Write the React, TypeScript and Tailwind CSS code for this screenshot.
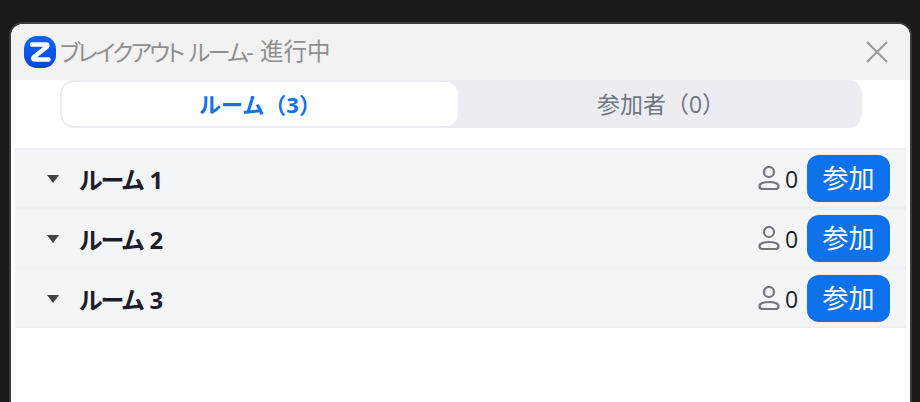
const rooms = ["ルーム 1", "ルーム 2", "ルーム 3"];

const font = "font-['Open_Sans','Noto_Sans_CJK_JP',sans-serif]";

function ZoomLogo() {
  return (
    <svg width="32" height="32" viewBox="0 0 32 32" className="shrink-0">
      <defs>
        <linearGradient id="logo-bg" x1="0" y1="0" x2="0" y2="1">
          <stop offset="0" stopColor="#0f66ff" />
          <stop offset="1" stopColor="#0845d8" />
        </linearGradient>
      </defs>
      <rect x="0" y="0" width="32" height="32" rx="13" fill="url(#logo-bg)" />
      <path
        d="M8 8.5H22Q24.5 8.5 22.5 11L10 21Q8 23.5 11 23.5H24.5"
        fill="none"
        stroke="#fff"
        strokeWidth="4.5"
        strokeLinecap="round"
        strokeLinejoin="round"
      />
    </svg>
  );
}

function PersonIcon() {
  return (
    <svg width="22" height="24" viewBox="0 0 22 24" fill="none" stroke="#6e7680" strokeWidth="2.2">
      <circle cx="11" cy="6" r="5" />
      <path d="M1.5 20C1.5 17.5 6 16 11 16S20.5 17.5 20.5 20C20.5 22.2 19.5 23 17.5 23H4.5C2.5 23 1.5 22.2 1.5 20Z" />
    </svg>
  );
}

function RoomRow({ name }: { name: string }) {
  return (
    <div className="flex h-[60px] items-center border-y-2 border-[#eeeff2] bg-[#f4f5f7] pl-[32px] pr-[16px]">
      <svg width="12" height="8" viewBox="0 0 12 8" className="mt-[2px] shrink-0">
        <path d="M0 0H12L6 8Z" fill="#444444" />
      </svg>
      <span className="ml-[20px] pt-[3px] text-[24px] font-bold tracking-[-1.4px] [word-spacing:2px] text-[#1c1c2b] [font-feature-settings:'palt']">
        {name}
      </span>
      <div className="ml-auto flex items-center">
        <PersonIcon />
        <span className="ml-[5px] w-[22px] pt-[2px] text-[23px] text-[#1c1c2b]">0</span>
        <button className="h-[47px] w-[83px] rounded-[12px] bg-[#0e72ed] text-[26px] text-white">
          参加
        </button>
      </div>
    </div>
  );
}

export default function App() {
  return (
    <div className={`h-[402px] w-[920px] overflow-hidden bg-[#1a1a1a] pl-[9px] pr-[8px] pt-[22px] ${font}`}>
      <div className="h-[400px] rounded-t-[14px] border-2 border-b-0 border-[#3a3a3a] bg-white">
        <div className="flex h-[56px] items-center rounded-t-[12px] bg-[#f2f2f2] pl-[13px] pr-[22px]">
          <ZoomLogo />
          <span className="ml-[4px] text-[23px] tracking-[-2.6px] [word-spacing:3px] text-[#8f8f8f] [font-feature-settings:'palt']">
            ブレイクアウト ルーム-
          </span>
          <span className="ml-[9px] text-[23.5px] text-[#8f8f8f]">進行中</span>
          <svg width="22" height="22" viewBox="0 0 22 22" className="ml-auto" stroke="#999999" strokeWidth="2">
            <path d="M1 1L21 21M21 1L1 21" />
          </svg>
        </div>
        <div className="ml-[49px] mr-[48px] flex h-[48px] overflow-hidden rounded-[14px] bg-[#ecedf3]">
          <div className="flex w-[400px] items-center justify-center rounded-[14px] border-2 border-[#ecedf3] bg-white pt-[1px] text-[22px] font-bold text-[#0e72ed]">
            ルーム（3）
          </div>
          <div className="flex flex-1 items-center justify-center pt-[1px] text-[23px] text-[#6e7680]">参加者（0）</div>
        </div>
        <div className="mx-[4px] mt-[20px]">
          {rooms.map((r) => (
            <RoomRow key={r} name={r} />
          ))}
        </div>
      </div>
    </div>
  );
}
